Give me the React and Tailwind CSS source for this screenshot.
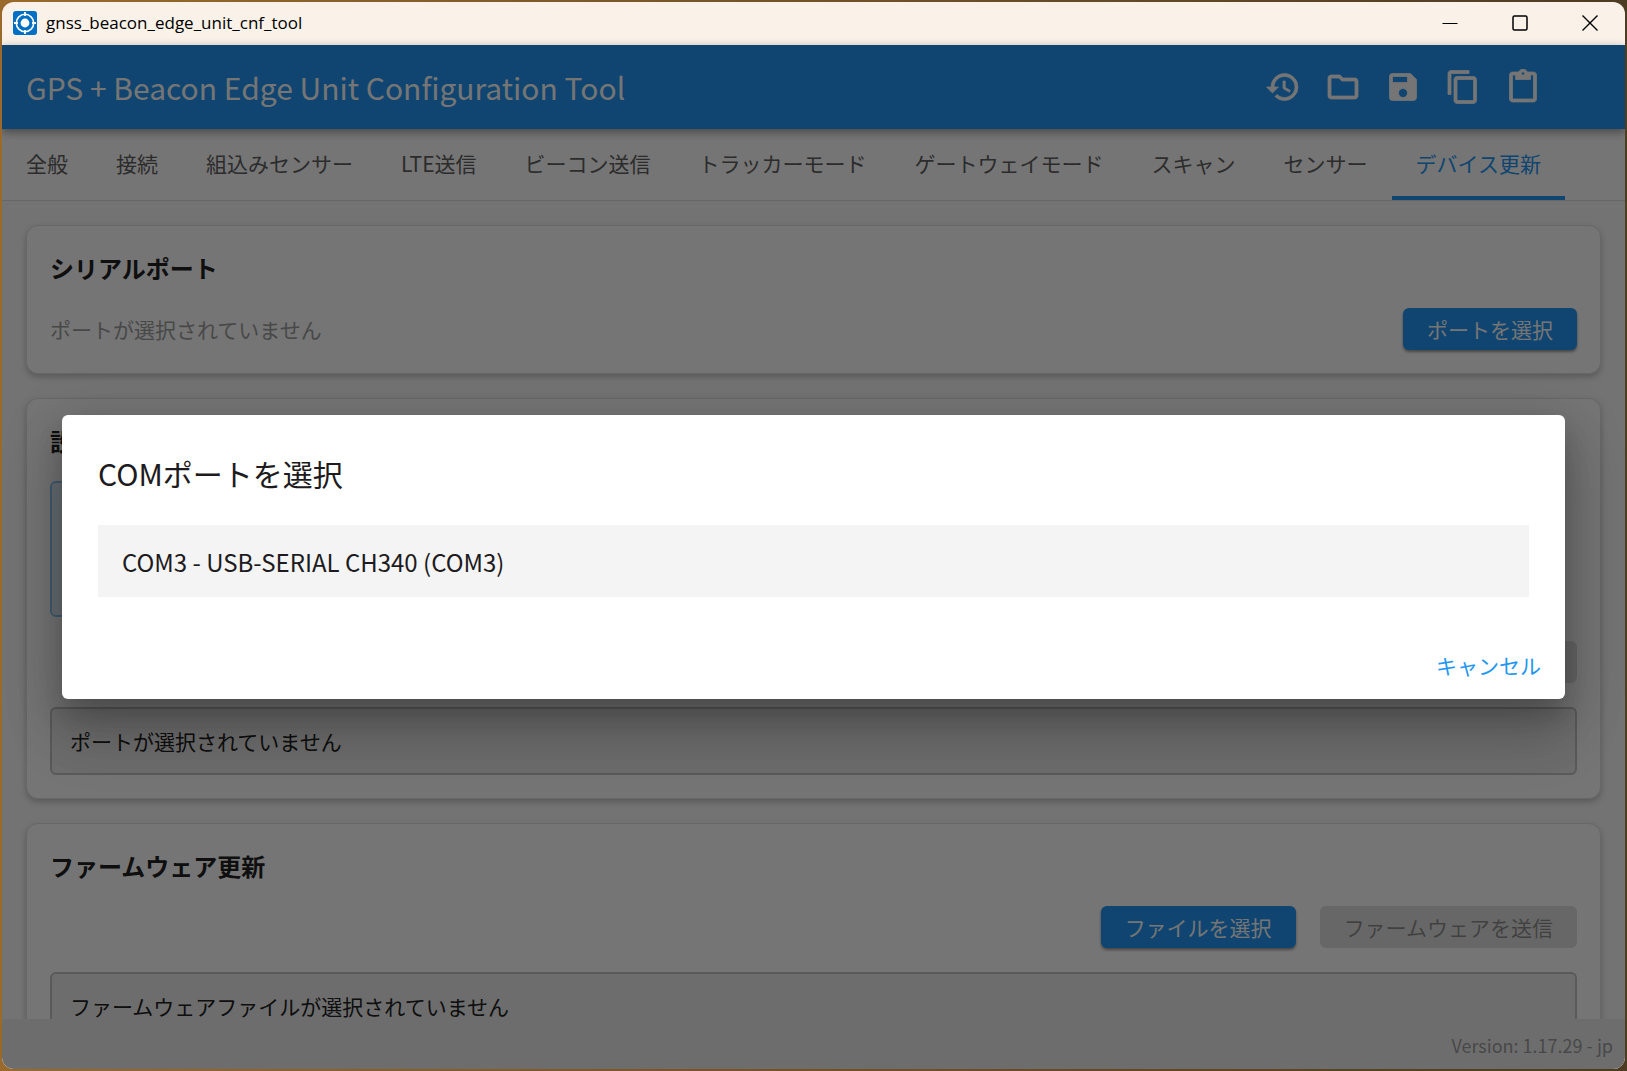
import React, { useState } from "react";
import {
  MdHistory,
  MdOutlineFolder,
  MdSave,
  MdContentCopy,
  MdContentPaste,
} from "react-icons/md";

const TABS = [
  "全般",
  "接続",
  "組込みセンサー",
  "LTE送信",
  "ビーコン送信",
  "トラッカーモード",
  "ゲートウェイモード",
  "スキャン",
  "センサー",
  "デバイス更新",
];

const ACTIONS = [
  { label: "履歴", icon: MdHistory },
  { label: "開く", icon: MdOutlineFolder },
  { label: "保存", icon: MdSave },
  { label: "コピー", icon: MdContentCopy },
  { label: "貼り付け", icon: MdContentPaste },
];

const PORTS = ["COM3 - USB-SERIAL CH340 (COM3)"];

function AppLogo() {
  return (
    <svg viewBox="0 0 24 24" className="size-6" aria-hidden="true">
      <rect width="24" height="24" rx="3" fill="#0070c4" />
      <circle cx="12" cy="12" r="8.7" fill="none" stroke="#fff" strokeWidth="1.6" />
      <circle cx="12" cy="12" r="4.4" fill="#fff" />
      <path d="M12 1v4M12 19v4M1 12h4M19 12h4" stroke="#fff" strokeWidth="1.8" />
    </svg>
  );
}

function TitleBar() {
  return (
    <div className="flex h-[43px] shrink-0 items-center bg-[#faf2e8] pb-[2px] pl-[11px] text-black">
      <AppLogo />
      <span className="ml-[9px] flex-1 font-['Open_Sans','Noto_Sans',sans-serif] text-[17px] leading-6">
        gnss_beacon_edge_unit_cnf_tool
      </span>
      <button aria-label="最小化" className="flex h-full w-[70px] items-center justify-center">
        <svg viewBox="0 0 16 16" className="size-4" stroke="#000" fill="none">
          <path d="M0.5 8.5h15" />
        </svg>
      </button>
      <button aria-label="最大化" className="flex h-full w-[70px] items-center justify-center">
        <svg viewBox="0 0 16 16" className="size-4" stroke="#000" strokeWidth="1.5" fill="none">
          <rect x="1" y="1" width="14" height="14" rx="1.5" />
        </svg>
      </button>
      <button aria-label="閉じる" className="flex h-full w-[70px] items-center justify-center">
        <svg viewBox="0 0 16 16" className="size-4" stroke="#000" strokeWidth="1.4" fill="none">
          <path d="M0.5 0.5l15 15M15.5 0.5l-15 15" />
        </svg>
      </button>
    </div>
  );
}

function AppBar() {
  return (
    <header className="z-10 flex h-[84px] shrink-0 items-center bg-[#2196f3] pr-[72px] pl-6 text-white shadow-[0_3px_9px_rgba(0,0,0,0.4)]">
      <h1 className="flex-1 text-3xl leading-10">
        GPS + Beacon Edge Unit Configuration Tool
      </h1>
      {ACTIONS.map(({ label, icon: Icon }) => (
        <button key={label} aria-label={label} className="flex size-[60px] items-center justify-center">
          <Icon className="size-9 [&>path:last-child]:stroke-[0.5]" />
        </button>
      ))}
    </header>
  );
}

function Card({ title, children }) {
  return (
    <section className="shrink-0 rounded-xl border border-[#e0e0e0] bg-white px-[23px] pt-[22px] pb-[23px] shadow-[0_3px_6px_rgba(0,0,0,0.22)]">
      <h2 className="mb-5 text-2xl leading-10 font-bold text-[#212121]">{title}</h2>
      {children}
    </section>
  );
}

function Button({ disabled, children }) {
  return (
    <button
      disabled={disabled}
      className={`h-[42px] rounded-md px-6 text-[21px] leading-[30px] ${
        disabled
          ? "bg-[#e0e0e0] text-black/38"
          : "bg-[#2196f3] text-white shadow-[0_2px_3px_rgba(0,0,0,0.4)]"
      }`}
    >
      {children}
    </button>
  );
}

function StatusBox({ children }) {
  return (
    <div className="mt-6 rounded-md border-2 border-[#c4c4c4] bg-[#eeeeee] px-[18px] py-4 text-[21px] leading-8 text-[#212121]">
      {children}
    </div>
  );
}

function PortDialog({ onClose }) {
  return (
    <div className="absolute inset-0 z-20 flex items-center bg-black/54 px-[60px]">
      <div
        role="dialog"
        aria-labelledby="port-dialog-title"
        className="w-full rounded-md bg-white shadow-[0_16px_24px_rgba(0,0,0,0.16),0_36px_57px_4px_rgba(0,0,0,0.14),0_14px_60px_8px_rgba(0,0,0,0.12)]"
      >
        <h2 id="port-dialog-title" className="px-9 pt-9 text-3xl leading-[44px] text-[#1d1b20]">
          COMポートを選択
        </h2>
        <ul className="px-9 pt-[30px]">
          {PORTS.map((port) => (
            <li key={port}>
              <button
                onClick={onClose}
                className="h-[72px] w-full bg-[#f4f4f4] px-6 pt-[2px] text-left text-2xl text-[#1d1b20]"
              >
                {port}
              </button>
            </li>
          ))}
        </ul>
        <div className="flex justify-end px-3 pt-[46px] pb-[10px]">
          <button onClick={onClose} className="h-[46px] px-3 text-[21px] text-[#2196f3]">
            キャンセル
          </button>
        </div>
      </div>
    </div>
  );
}

export default function App() {
  const [tab, setTab] = useState("デバイス更新");
  const [dialogOpen, setDialogOpen] = useState(true);

  return (
    <div
      lang="ja"
      className="h-screen bg-linear-to-r from-[#9a6a2c] to-[#4d3b22] p-[2px] font-['Noto_Sans_CJK_JP',sans-serif]"
    >
      <div className="flex h-full flex-col overflow-hidden rounded-xl">
        <TitleBar />

        <div className="relative flex min-h-0 flex-1 flex-col bg-[#fafafa]">
          <AppBar />

          <nav className="flex h-[72px] shrink-0 border-b border-[#dedede] bg-white">
            {TABS.map((name) => (
              <button
                key={name}
                onClick={() => setTab(name)}
                className={`border-b-4 px-6 pt-[2px] text-[21px] whitespace-nowrap ${
                  tab === name
                    ? "border-[#2196f3] text-[#2196f3]"
                    : "border-transparent text-[#616161]"
                }`}
              >
                {name}
              </button>
            ))}
          </nav>

          <main className="flex min-h-0 flex-1 flex-col gap-6 overflow-y-auto px-6 pt-6 [scrollbar-width:none]">
            <Card title="シリアルポート">
              <div className="flex items-center justify-between">
                <p className="text-[21px] leading-8 text-[#9e9e9e]">ポートが選択されていません</p>
                <Button>ポートを選択</Button>
              </div>
            </Card>

            <Card title="設">
              <div className="h-[136px] w-3/4 rounded-md border-2 border-[#90caf9] bg-[#e3f2fd]" />
              <div className="mt-6 flex justify-end gap-6">
                <button disabled aria-label="送信" className="h-[42px] w-[174px] rounded-md bg-[#e0e0e0]" />
              </div>
              <StatusBox>ポートが選択されていません</StatusBox>
            </Card>

            <Card title="ファームウェア更新">
              <div className="flex justify-end gap-6">
                <Button>ファイルを選択</Button>
                <Button disabled>ファームウェアを送信</Button>
              </div>
              <StatusBox>ファームウェアファイルが選択されていません</StatusBox>
            </Card>
          </main>

          <footer className="flex h-[50px] shrink-0 items-center justify-end bg-[#eeeeee] px-3 pt-[2px] text-lg text-[#9e9e9e]">
            Version: 1.17.29 - jp
          </footer>

          {dialogOpen && <PortDialog onClose={() => setDialogOpen(false)} />}
        </div>
      </div>
    </div>
  );
}
